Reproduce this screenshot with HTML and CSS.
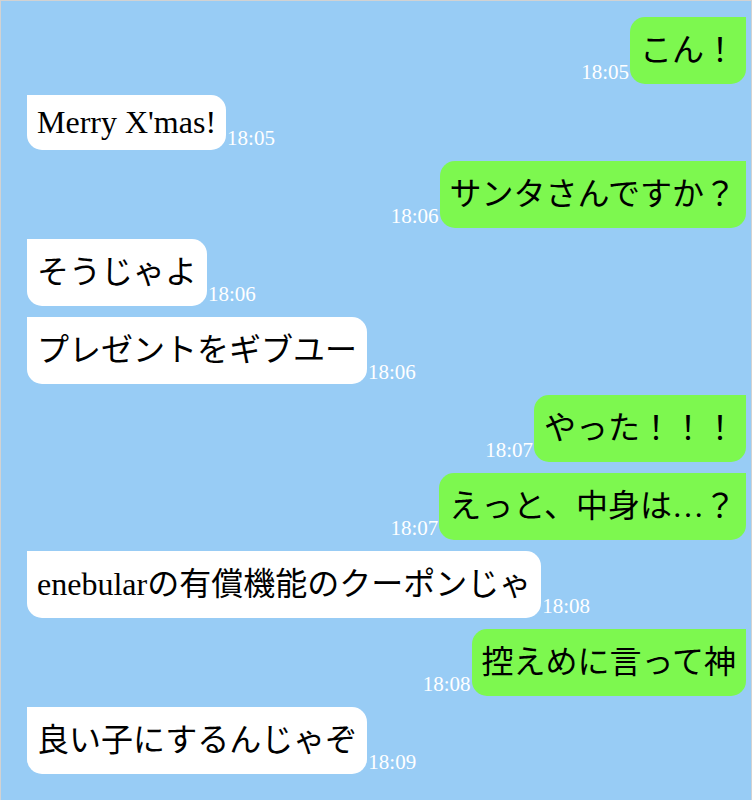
FILE: index.html
```html
<!DOCTYPE html>
<html lang="ja">
<head>
<meta charset="utf-8">
<title>Chat</title>
<link rel="stylesheet" href="styles.css">
</head>
<body>
<div class="chat">
  <div class="row me"><span class="time">18:05</span><div class="bubble">こん！</div></div>
  <div class="row you"><div class="bubble latin">Merry X'mas!</div><span class="time">18:05</span></div>
  <div class="row me"><span class="time">18:06</span><div class="bubble">サンタさんですか？</div></div>
  <div class="row you"><div class="bubble">そうじゃよ</div><span class="time">18:06</span></div>
  <div class="row you"><div class="bubble">プレゼントをギブユー</div><span class="time">18:06</span></div>
  <div class="row me"><span class="time">18:07</span><div class="bubble">やった！！！</div></div>
  <div class="row me"><span class="time">18:07</span><div class="bubble">えっと、中身は…？</div></div>
  <div class="row you"><div class="bubble">enebularの有償機能のクーポンじゃ</div><span class="time">18:08</span></div>
  <div class="row me"><span class="time">18:08</span><div class="bubble">控えめに言って神</div></div>
  <div class="row you"><div class="bubble">良い子にするんじゃぞ</div><span class="time">18:09</span></div>
</div>
</body>
</html>
```
FILE: styles.css
```css
html, body {
  margin: 0;
  padding: 0;
}

body {
  font-family: "Liberation Serif", "Noto Sans CJK JP", serif;
  background: #ffffff;
}

.chat {
  box-sizing: border-box;
  width: 752px;
  min-height: 830px;
  background: #98ccf5;
  border: 1px solid #d2d2d2;
  border-bottom: none;
  padding: 16px 5px 20px 26px;
  display: flex;
  flex-direction: column;
  gap: 11px;
}

.row {
  display: flex;
  align-items: flex-end;
}

.row.me {
  justify-content: flex-end;
}

.row.you {
  justify-content: flex-start;
}

.bubble {
  font-size: 32px;
  line-height: 47px;
  color: #000;
  padding: 10px 10px;
  white-space: nowrap;
}

.bubble.latin {
  line-height: 35px;
}

.you .bubble {
  background: #ffffff;
  border-radius: 0 15px 15px 15px;
}

.me .bubble {
  background: #7df84f;
  border-radius: 15px 0 15px 15px;
}

.time {
  font-size: 21px;
  line-height: 24px;
  color: #ffffff;
  padding: 0 1px;
}
```
